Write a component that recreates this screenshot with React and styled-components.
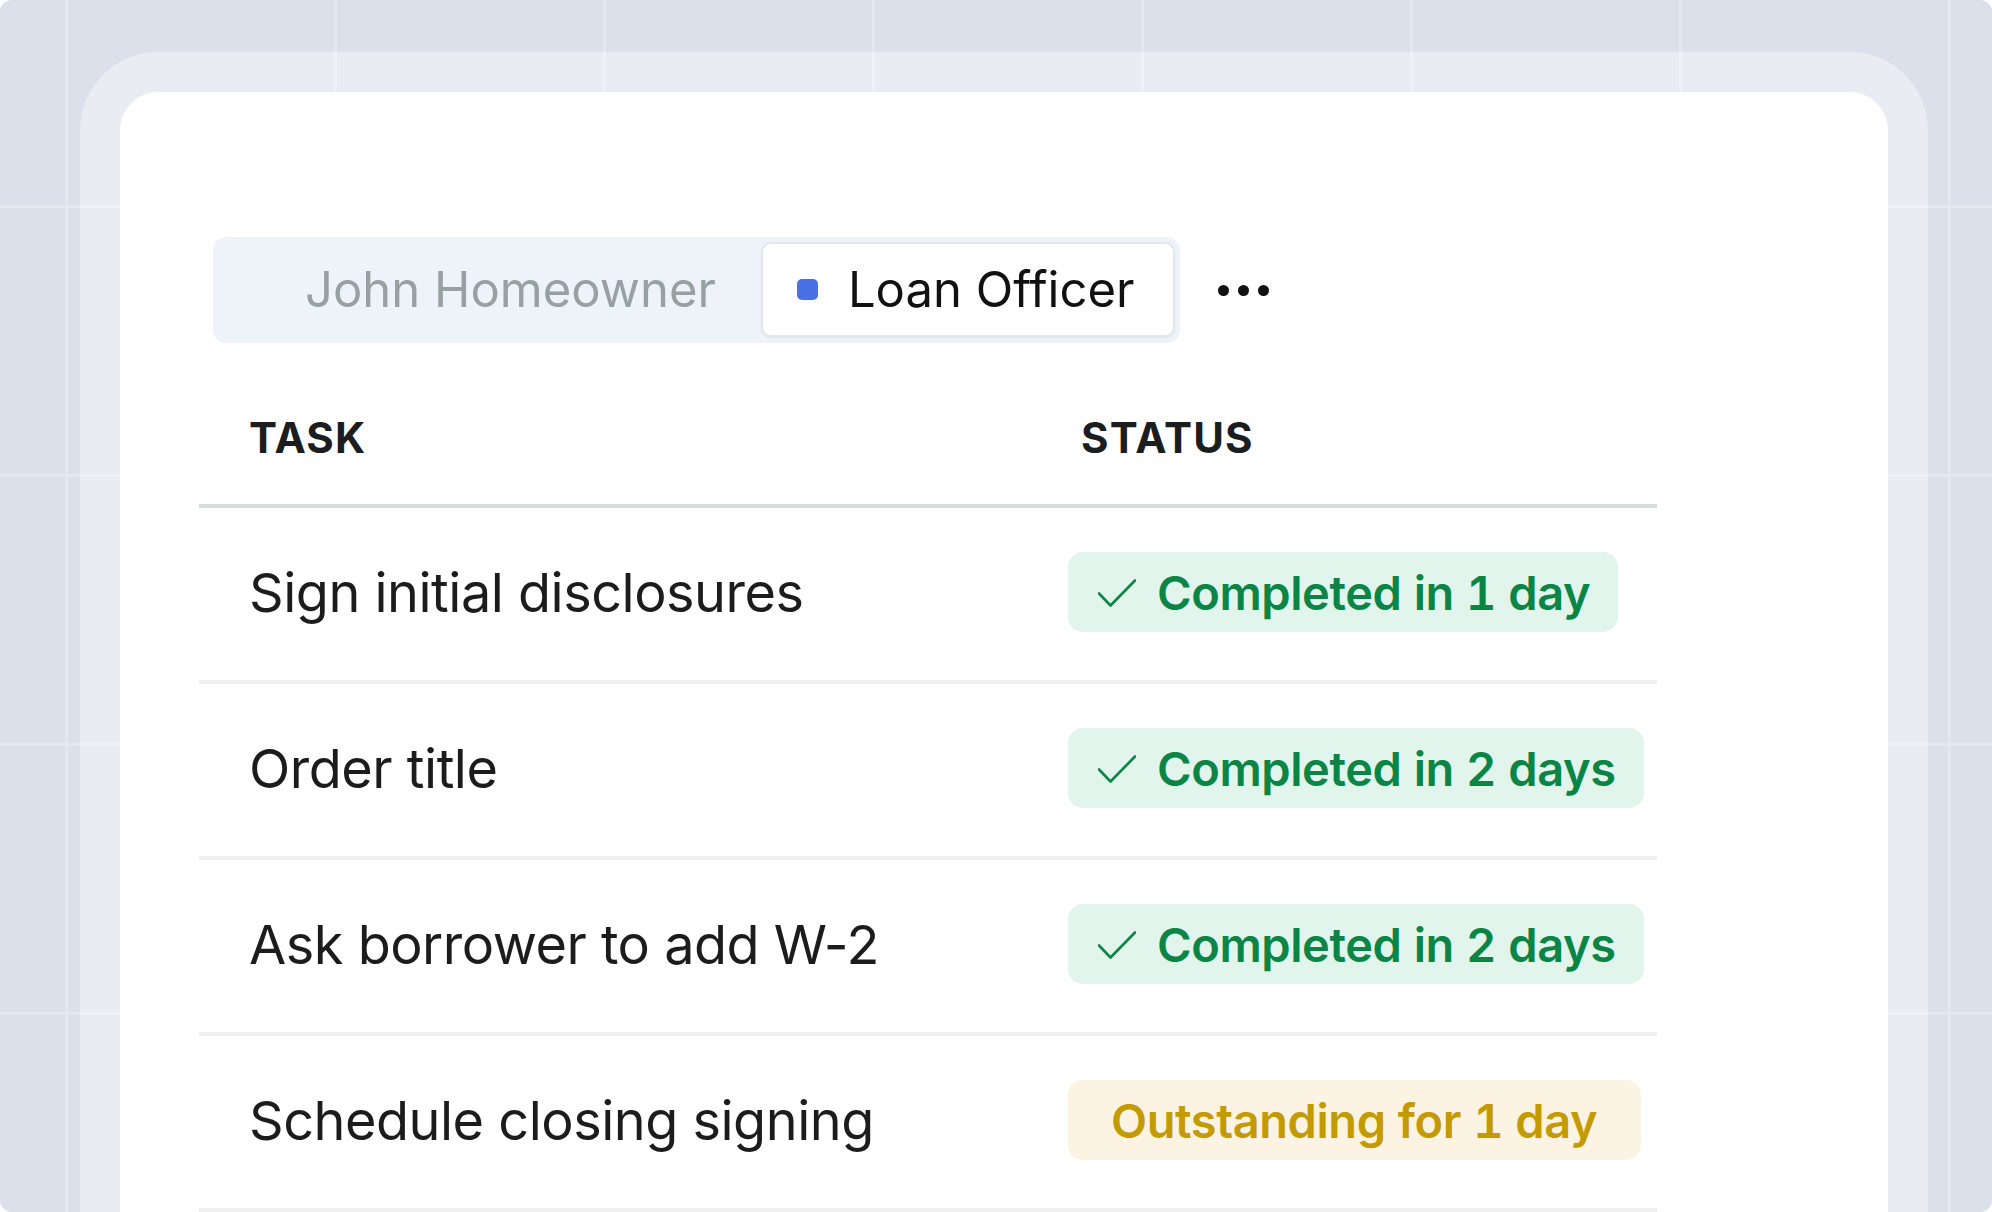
import React from 'react';
import styled, { createGlobalStyle } from 'styled-components';

const GlobalStyle = createGlobalStyle`
  html, body {
    margin: 0;
    padding: 0;
    background: #ffffff;
  }
  body {
    font-family: Inter, "Noto Sans", "Liberation Sans", sans-serif;
    -webkit-font-smoothing: antialiased;
  }
`;

const tasks = [
  { name: 'Sign initial disclosures', status: 'done', label: 'Completed in 1 day' },
  { name: 'Order title', status: 'done', label: 'Completed in 2 days' },
  { name: 'Ask borrower to add W-2', status: 'done', label: 'Completed in 2 days' },
  { name: 'Schedule closing signing', status: 'pending', label: 'Outstanding for 1 day' },
];

function CheckIcon() {
  return (
    <svg width="38" height="28" viewBox="0 0 38 28" fill="none">
      <polyline
        points="1,14.5 12.5,26.5 37,1.5"
        stroke="#0b8546"
        strokeWidth="2.6"
        strokeLinecap="round"
        strokeLinejoin="round"
      />
    </svg>
  );
}

function App() {
  return (
    <>
      <GlobalStyle />
      <Canvas>
        <Frame>
          <Card>
            <Toolbar>
              <Segmented>
                <Tab>
                  <Dot />
                  John Homeowner
                </Tab>
                <Tab active>
                  <Dot active />
                  Loan Officer
                </Tab>
              </Segmented>
              <More>
                <span />
                <span />
                <span />
              </More>
            </Toolbar>

            <Table>
              <HeadRow>
                <HeadCell>Task</HeadCell>
                <HeadCell status>Status</HeadCell>
              </HeadRow>
              {tasks.map((task, index) => (
                <Row key={index}>
                  <TaskCell>{task.name}</TaskCell>
                  <StatusCell>
                    <Pill tone={task.status}>
                      {task.status === 'done' && <CheckIcon />}
                      {task.label}
                    </Pill>
                  </StatusCell>
                </Row>
              ))}
            </Table>
          </Card>
        </Frame>
      </Canvas>
    </>
  );
}

export default App;

const Canvas = styled.div`
  width: 1992px;
  height: 1212px;
  overflow: hidden;
  border-radius: 12px;
  box-sizing: border-box;
  padding: 52px 64px 0 80px;
  background-color: #dbe0eb;
  background-image:
    linear-gradient(to right, #e4e8f0 0, #e4e8f0 3px, transparent 3px),
    linear-gradient(to bottom, #e4e8f0 0, #e4e8f0 3px, transparent 3px);
  background-size: 269px 269px;
  background-position: 65px 205px;
`;

const Frame = styled.div`
  width: 1848px;
  height: 1200px;
  box-sizing: border-box;
  padding: 40px 40px 0 40px;
  border-radius: 78px 78px 0 0;
  background: rgba(255, 255, 255, 0.38);
`;

const Card = styled.div`
  height: 100%;
  box-sizing: border-box;
  padding: 145px 0 0 79px;
  background: #ffffff;
  border-radius: 38px 38px 0 0;
`;

const Toolbar = styled.div`
  display: flex;
  align-items: center;
  gap: 38px;
  padding-left: 14px;
`;

const Segmented = styled.div`
  display: flex;
  align-items: center;
  gap: 4px;
  height: 106px;
  box-sizing: border-box;
  padding: 5px 5px 6px 5px;
  background: #eef3f9;
  border-radius: 13px;
`;

const Tab = styled.div`
  display: flex;
  align-items: center;
  gap: 30px;
  height: 95px;
  box-sizing: border-box;
  padding: 0 39px 0 34px;
  border-radius: 10px;
  font-size: 49px;
  font-weight: 400;
  letter-spacing: 0;
  color: ${(p) => (p.active ? '#111111' : '#98a1a1')};
  background: ${(p) => (p.active ? '#ffffff' : 'transparent')};
  border: 2px solid ${(p) => (p.active ? '#e3e7ec' : 'transparent')};
  box-shadow: ${(p) => (p.active ? '0 1px 2px rgba(20, 30, 50, 0.06)' : 'none')};
`;

const Dot = styled.span`
  width: 21px;
  height: 21px;
  border-radius: 5px;
  flex-shrink: 0;
  background: ${(p) => (p.active ? '#4a70e6' : 'transparent')};
`;

const More = styled.div`
  display: flex;
  align-items: center;
  gap: 9px;

  span {
    width: 11px;
    height: 11px;
    border-radius: 50%;
    background: #111111;
  }
`;

const Table = styled.div`
  width: 1458px;
  margin-top: 27px;
`;

const HeadRow = styled.div`
  display: grid;
  grid-template-columns: 869px 1fr;
  align-items: center;
  height: 134px;
  border-bottom: 4px solid #d8dcdd;
`;

const HeadCell = styled.div`
  padding-left: ${(p) => (p.status ? '13px' : '50px')};
  font-size: 42px;
  font-weight: 700;
  letter-spacing: 0.028em;
  text-transform: uppercase;
  color: #1c1d1f;
`;

const Row = styled.div`
  display: grid;
  grid-template-columns: 869px 1fr;
  align-items: center;
  height: 176px;
  box-sizing: border-box;
  padding-bottom: 4px;
  border-bottom: 4px solid #f0f0f0;
`;

const TaskCell = styled.div`
  padding-left: 50px;
  font-size: 54px;
  font-weight: 400;
  letter-spacing: -0.009em;
  color: #1c1c1d;
`;

const StatusCell = styled.div`
  display: flex;
`;

const Pill = styled.div`
  display: flex;
  align-items: center;
  gap: 21px;
  height: 80px;
  box-sizing: border-box;
  padding: ${(p) => (p.tone === 'done' ? '0 28px 0 30px' : '0 44px 0 43px')};
  border-radius: 15px;
  font-size: 47px;
  font-weight: 600;
  letter-spacing: -0.009em;
  font-variant-numeric: tabular-nums;
  color: ${(p) => (p.tone === 'done' ? '#0b8546' : '#c39b00')};
  background: ${(p) => (p.tone === 'done' ? '#e1f5ec' : '#fdf3e2')};

  svg {
    flex-shrink: 0;
    margin-top: 1px;
  }
`;
